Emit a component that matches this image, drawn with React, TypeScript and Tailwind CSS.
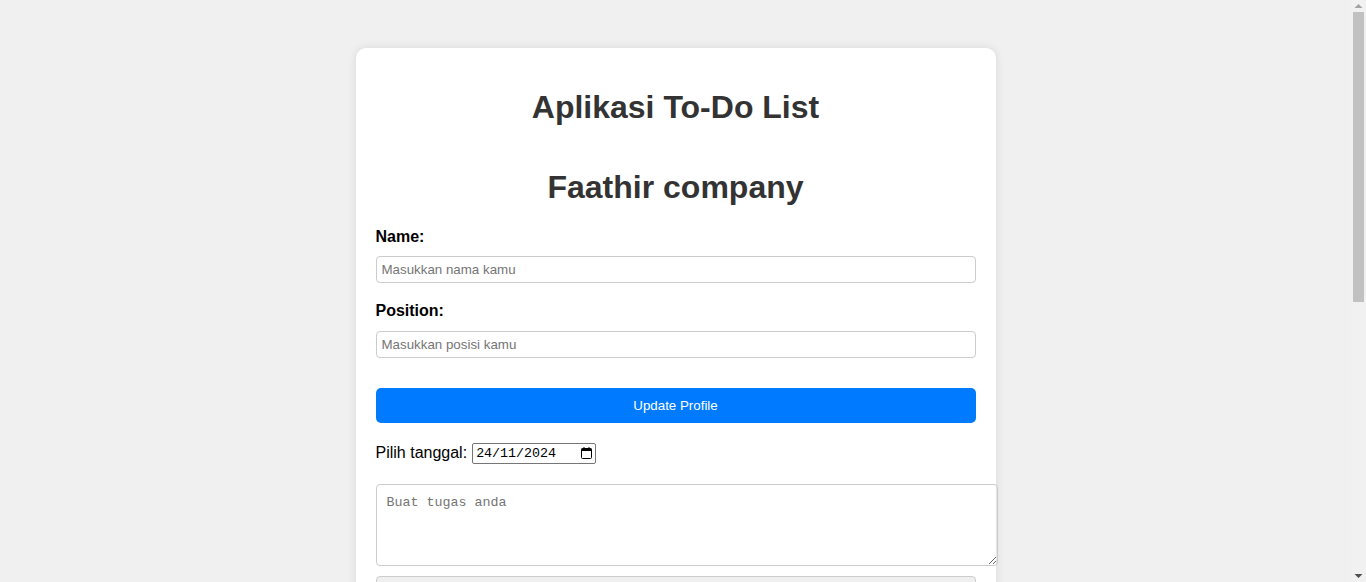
export default function App() {
  const tasks = [
    { text: "Menyelesaikan laporan mingguan", date: "24/11/2024" },
    { text: "Meeting dengan tim desain", date: "25/11/2024" },
    { text: "Review kode fitur login", date: "26/11/2024" },
    { text: "Update dokumentasi API", date: "27/11/2024" },
    { text: "Persiapan presentasi klien", date: "28/11/2024" },
  ];

  return (
    <div className="flex h-screen bg-[#f0f0f0] font-['Liberation_Sans',Arial,sans-serif]">
      <div className="flex-1 overflow-y-auto [scrollbar-width:none]">
        <div className="pt-[48px] pb-[48px]">
          <div className="mx-auto flex w-[640px] flex-col rounded-[10px] bg-white p-5 shadow-[0_0_10px_rgba(0,0,0,0.1)]">
            <h1 className="my-[21.44px] text-center text-[32px] leading-[36.8px] font-bold text-[#333]">
              Aplikasi To-Do List
            </h1>
            <h1 className="mt-[21.44px] mb-[22px] text-center text-[32px] leading-[36.8px] font-bold text-[#333]">
              Faathir company
            </h1>

            <label className="mb-[10px] block text-base leading-[18.4px] font-bold text-black">Name:</label>
            <input
              type="text"
              placeholder="Masukkan nama kamu"
              className="mb-[19px] h-[27px] w-full rounded-[4px] border border-[#ccc] px-[5px] text-[13.33px] placeholder:text-[#757575]"
            />

            <label className="mb-[10px] block text-base leading-[18.4px] font-bold text-black">Position:</label>
            <input
              type="text"
              placeholder="Masukkan posisi kamu"
              className="mb-[30px] h-[27px] w-full rounded-[4px] border border-[#ccc] px-[5px] text-[13.33px] placeholder:text-[#757575]"
            />

            <button className="h-[35px] w-full rounded-[5px] bg-[#007bff] pt-px text-[13.33px] text-white">
              Update Profile
            </button>

            <div className="mt-[20px] flex items-center gap-[5px] text-base leading-[18.4px] text-black">
              <span>Pilih tanggal:</span>
              {/* date field drawn by hand so the dd/mm/yyyy format stays fixed */}
              <div className="flex h-[21px] w-[124px] items-center justify-between rounded-[2px] border border-[#767676] pr-[3px] pl-[3px] font-['Liberation_Mono',monospace] text-[13.33px] leading-none">
                <span>24/11/2024</span>
                <svg width="11" height="12" viewBox="0 0 11 12" className="shrink-0">
                  <rect x="0.5" y="1.5" width="10" height="10" rx="1" fill="none" stroke="#000" />
                  <rect x="0.5" y="1.5" width="10" height="2.5" fill="#000" />
                  <rect x="2.5" y="0" width="1" height="2" fill="#000" />
                  <rect x="7.5" y="0" width="1" height="2" fill="#000" />
                </svg>
              </div>
            </div>

            <textarea
              rows={4}
              placeholder="Buat tugas anda"
              className="mt-[20px] h-[82px] w-[622px] max-w-none rounded-[4px] border border-[#ccc] p-[10px] font-['Liberation_Mono',monospace] text-[13.33px] leading-[15px] placeholder:text-[#757575]"
            />

            <button className="mt-[10px] h-[35px] w-full rounded-[4px] border border-[#ccc] bg-[#efefef] text-[13.33px] text-black">
              Tambah Tugas
            </button>

            <h2 className="mt-[20px] mb-[10px] text-[24px] leading-[28px] font-bold text-[#333]">Daftar Tugas</h2>
            <ul className="flex flex-col gap-[10px]">
              {tasks.map((t, i) => (
                <li
                  key={i}
                  className="flex items-center justify-between rounded-[4px] border border-[#ddd] bg-[#f9f9f9] px-[10px] py-[12px] text-[15px] text-[#333]"
                >
                  <div className="flex flex-col gap-[4px]">
                    <span>{t.text}</span>
                    <span className="text-[12px] text-[#777]">{t.date}</span>
                  </div>
                  <button className="rounded-[4px] bg-[#dc3545] px-[12px] py-[6px] text-[13px] text-white">Hapus</button>
                </li>
              ))}
            </ul>
          </div>
        </div>
      </div>

      {/* browser scrollbar as seen in the screenshot */}
      <div className="flex w-[15px] shrink-0 flex-col items-center bg-[#f1f1f1]">
        <svg width="9" height="12" viewBox="0 0 9 12">
          <path d="M0.5 8 L4.5 4 L8.5 8 Z" fill="#a3a3a3" />
        </svg>
        <div className="h-[290px] w-[11px] bg-[#c1c1c1]" />
        <div className="flex-1" />
        <svg width="9" height="12" viewBox="0 0 9 12">
          <path d="M0.5 4 L4.5 8 L8.5 4 Z" fill="#505050" />
        </svg>
      </div>
    </div>
  );
}
